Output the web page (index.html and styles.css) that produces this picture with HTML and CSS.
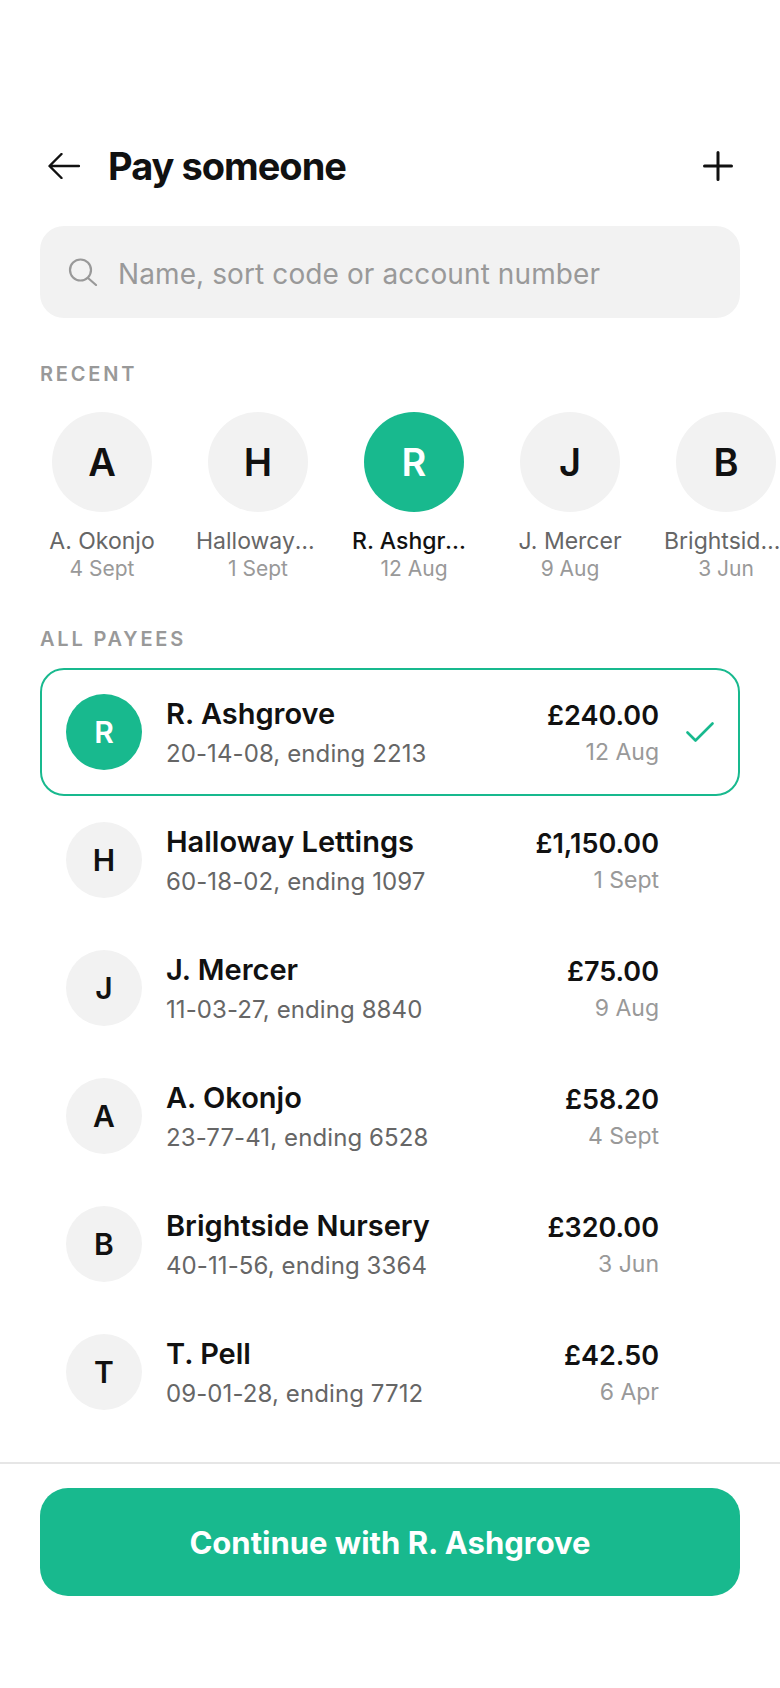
FILE: index.html
```html
<!DOCTYPE html>
<html>
    <head>
        <title>Pay someone</title>
        <link rel="stylesheet" href="styles.css">
    </head>
    <body>
        <div class="app">
            <header class="top">
                <svg class="back" width="32" height="26" viewBox="0 0 32 26" fill="none" stroke="#111" stroke-width="2.4" stroke-linecap="round" stroke-linejoin="round"><path d="M31 13H2M13.500 1 1.500 13l12 12"/></svg>
                <h1 class="title">Pay someone</h1>
                <svg class="plus" width="30" height="30" viewBox="0 0 30 30" fill="none" stroke="#111" stroke-width="3" stroke-linecap="round"><path d="M15 1.500v27M1.500 15h27"/></svg>
            </header>

            <div class="search">
                <svg width="30" height="28" viewBox="0 0 30 28" fill="none" stroke="#999" stroke-width="2.2" stroke-linecap="round"><circle cx="12.500" cy="12" r="10.500"/><path d="M20 20l8 7"/></svg>
                <span>Name, sort code or account number</span>
            </div>

            <p class="label recent-label">RECENT</p>
            <div class="recent">
                <div class="recent-item">
                    <div class="bubble">A</div>
                    <p class="recent-name">A. Okonjo</p>
                    <p class="recent-date">4 Sept</p>
                </div>
                <div class="recent-item">
                    <div class="bubble">H</div>
                    <p class="recent-name">Halloway Lettings</p>
                    <p class="recent-date">1 Sept</p>
                </div>
                <div class="recent-item selected">
                    <div class="bubble">R</div>
                    <p class="recent-name">R. Ashgrove</p>
                    <p class="recent-date">12 Aug</p>
                </div>
                <div class="recent-item">
                    <div class="bubble">J</div>
                    <p class="recent-name">J. Mercer</p>
                    <p class="recent-date">9 Aug</p>
                </div>
                <div class="recent-item">
                    <div class="bubble">B</div>
                    <p class="recent-name">Brightside Nursery</p>
                    <p class="recent-date">3 Jun</p>
                </div>
            </div>

            <p class="label payees-label">ALL PAYEES</p>
            <div class="payees">
                <div class="payee selected">
                    <div class="avatar">R</div>
                    <div class="info">
                        <p class="name">R. Ashgrove</p>
                        <p class="account">20-14-08, ending 2213</p>
                    </div>
                    <div class="money">
                        <p class="amount">£240.00</p>
                        <p class="date">12 Aug</p>
                    </div>
                    <div class="tick">
                        <svg width="28" height="20" viewBox="0 0 28 20" fill="none" stroke="#18b98e" stroke-width="2.6" stroke-linecap="round" stroke-linejoin="round"><path d="M1.500 10.500l8 8L26.500 1.500"/></svg>
                    </div>
                </div>
                <div class="payee">
                    <div class="avatar">H</div>
                    <div class="info">
                        <p class="name">Halloway Lettings</p>
                        <p class="account">60-18-02, ending 1097</p>
                    </div>
                    <div class="money">
                        <p class="amount">£1,150.00</p>
                        <p class="date">1 Sept</p>
                    </div>
                    <div class="tick"></div>
                </div>
                <div class="payee">
                    <div class="avatar">J</div>
                    <div class="info">
                        <p class="name">J. Mercer</p>
                        <p class="account">11-03-27, ending 8840</p>
                    </div>
                    <div class="money">
                        <p class="amount">£75.00</p>
                        <p class="date">9 Aug</p>
                    </div>
                    <div class="tick"></div>
                </div>
                <div class="payee">
                    <div class="avatar">A</div>
                    <div class="info">
                        <p class="name">A. Okonjo</p>
                        <p class="account">23-77-41, ending 6528</p>
                    </div>
                    <div class="money">
                        <p class="amount">£58.20</p>
                        <p class="date">4 Sept</p>
                    </div>
                    <div class="tick"></div>
                </div>
                <div class="payee">
                    <div class="avatar">B</div>
                    <div class="info">
                        <p class="name">Brightside Nursery</p>
                        <p class="account">40-11-56, ending 3364</p>
                    </div>
                    <div class="money">
                        <p class="amount">£320.00</p>
                        <p class="date">3 Jun</p>
                    </div>
                    <div class="tick"></div>
                </div>
                <div class="payee">
                    <div class="avatar">T</div>
                    <div class="info">
                        <p class="name">T. Pell</p>
                        <p class="account">09-01-28, ending 7712</p>
                    </div>
                    <div class="money">
                        <p class="amount">£42.50</p>
                        <p class="date">6 Apr</p>
                    </div>
                    <div class="tick"></div>
                </div>
            </div>

            <footer class="bottom">
                <button class="continue">Continue with R. Ashgrove</button>
            </footer>
        </div>
    </body>
</html>
```

FILE: styles.css
```css
*{
    box-sizing: border-box;
}
body{
    margin: 0;
    background-color: white;
    color: #111;
    font-family: Inter, "Liberation Sans", sans-serif;
}
p{
    margin: 0;
}
.app{
    width: 780px;
    height: 1688px;
    overflow: hidden;
    padding-top: 140px;
}
.top{
    display: flex;
    align-items: center;
    height: 52px;
    padding: 0 47px 0 48px;
}
.title{
    flex: 1;
    margin: 0 0 0 28px;
    font-size: 38px;
    font-weight: 700;
    letter-spacing: -1px;
}
.search{
    display: flex;
    align-items: center;
    gap: 20px;
    height: 92px;
    margin: 34px 40px 0;
    padding: 0 28px;
    background-color: #f2f2f2;
    border-radius: 24px;
    color: #999;
    font-size: 28px;
    letter-spacing: 0.1px;
}
.search span{
    padding-top: 3px;
}
.label{
    padding-left: 40px;
    color: #999;
    font-size: 20px;
    font-weight: 600;
    letter-spacing: 2.8px;
    line-height: 24px;
}
.recent-label{
    margin-top: 44px;
}
.recent{
    display: flex;
    gap: 32px;
    margin-top: 26px;
    padding-left: 40px;
    width: 900px;
}
.recent-item{
    width: 124px;
    text-align: center;
}
.bubble{
    display: flex;
    align-items: center;
    justify-content: center;
    width: 100px;
    height: 100px;
    margin: 0 auto;
    background-color: #f2f2f2;
    border-radius: 50%;
    font-size: 38px;
    font-weight: 600;
}
.recent-name{
    margin-top: 14px;
    color: #666;
    font-size: 23px;
    line-height: 30px;
    white-space: nowrap;
    overflow: hidden;
    text-overflow: ellipsis;
}
.recent-date{
    color: #999;
    font-size: 21px;
    line-height: 26px;
}
.recent-item.selected .bubble{
    background-color: #18b98e;
    color: white;
}
.recent-item.selected .recent-name{
    color: #111;
    font-weight: 500;
}
.payees-label{
    margin-top: 45px;
}
.payees{
    display: flex;
    flex-direction: column;
    margin: 17px 40px 0;
}
.payee{
    display: flex;
    align-items: center;
    height: 128px;
    padding: 0 24px;
    border: 2px solid transparent;
    border-radius: 24px;
}
.payee.selected{
    border-color: #18b98e;
}
.avatar{
    display: flex;
    align-items: center;
    justify-content: center;
    flex-shrink: 0;
    width: 76px;
    height: 76px;
    background-color: #f2f2f2;
    border-radius: 50%;
    font-size: 30px;
    font-weight: 600;
}
.payee.selected .avatar{
    background-color: #18b98e;
    color: white;
}
.info{
    flex: 1;
    margin-left: 24px;
}
.name{
    padding-top: 2px;
    font-size: 29px;
    font-weight: 600;
    line-height: 36px;
}
.account{
    margin-top: 6px;
    color: #666;
    font-size: 24px;
    letter-spacing: 0.1px;
    line-height: 32px;
}
.money{
    padding-top: 1px;
    text-align: right;
}
.amount{
    font-size: 27px;
    font-weight: 600;
    line-height: 36px;
}
.date{
    margin-top: 3px;
    color: #999;
    font-size: 23px;
    line-height: 30px;
}
.tick{
    display: flex;
    justify-content: flex-end;
    width: 55px;
}
.bottom{
    margin-top: 26px;
    padding: 24px 40px 0;
    border-top: 2px solid #e6e6e6;
}
.continue{
    display: block;
    width: 100%;
    height: 108px;
    background-color: #18b98e;
    border: none;
    border-radius: 28px;
    color: white;
    font-family: inherit;
    font-size: 31px;
    font-weight: 700;
    cursor: pointer;
}
```
